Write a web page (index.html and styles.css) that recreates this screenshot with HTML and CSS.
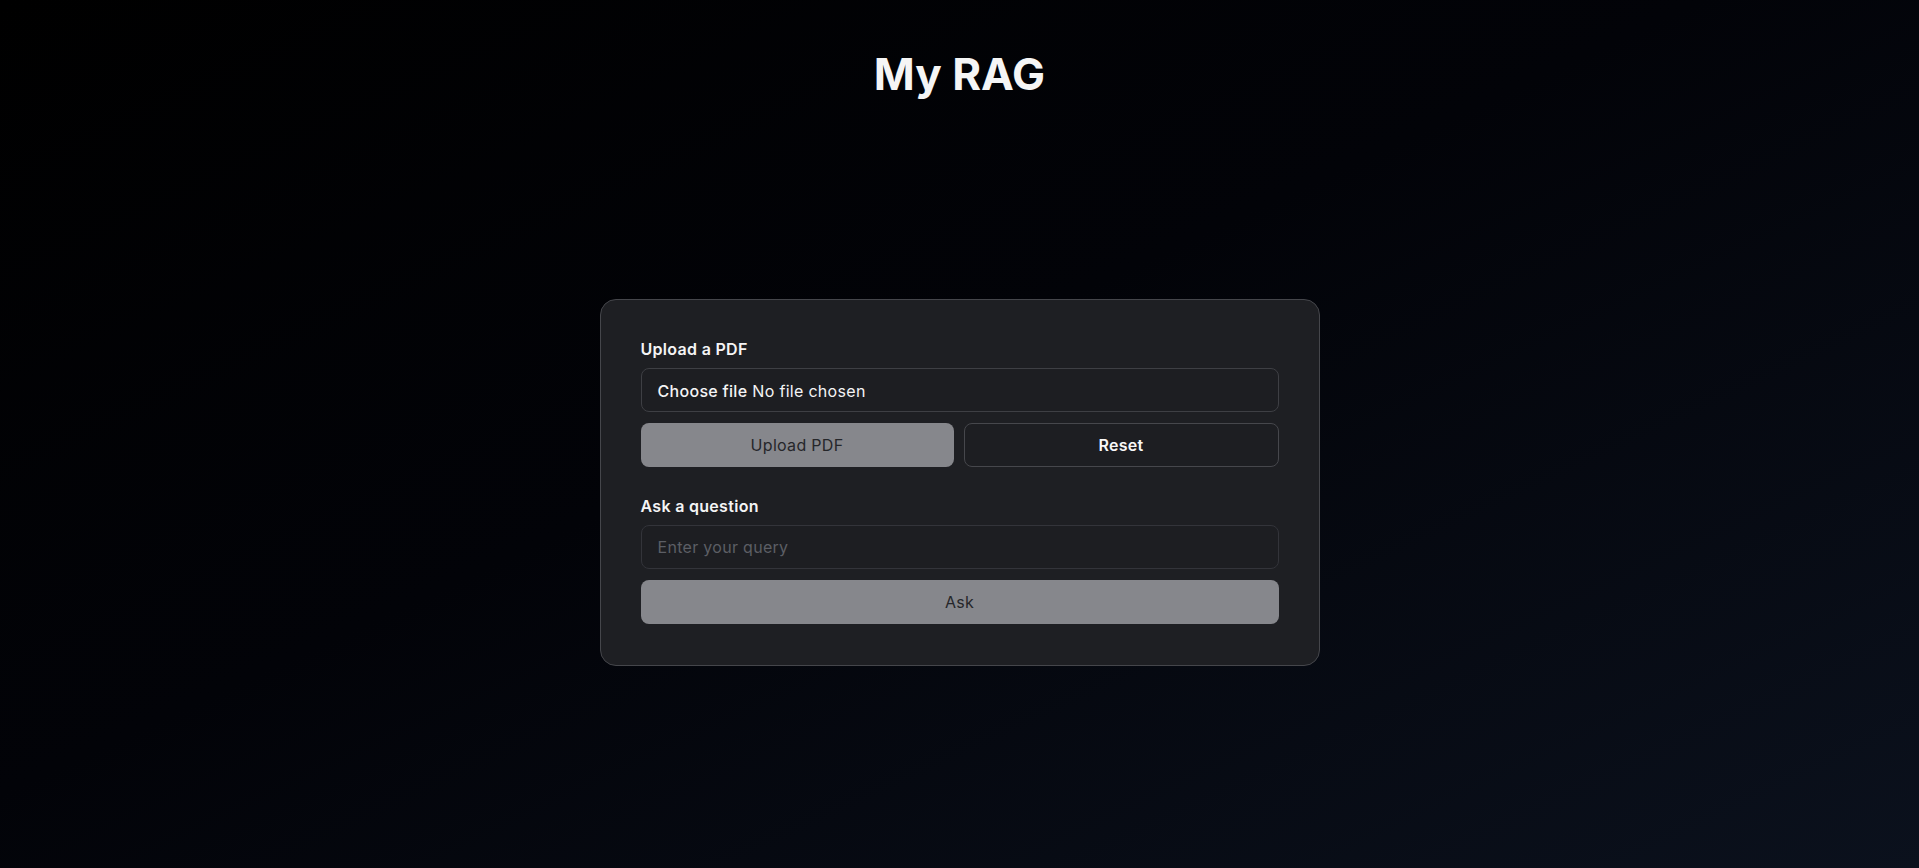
FILE: index.html
```html
<!DOCTYPE html>
<html lang="en">
<head>
    <meta charset="UTF-8">
    <meta name="viewport" content="width=device-width, initial-scale=1.0">
    <title>My RAG</title>
    <link rel="stylesheet" href="styles.css">
</head>
<body>
    <h1 class="title">My RAG</h1>

    <div class="card">
        <div class="section">
            <div class="label">Upload a PDF</div>
            <label class="file-input">
                <input type="file" accept="application/pdf">
                <span class="file-btn">Choose file</span>
                <span class="file-name">No file chosen</span>
            </label>
            <div class="button-row">
                <button class="btn btn-gray">Upload PDF</button>
                <button class="btn btn-outline">Reset</button>
            </div>
        </div>

        <div class="section section-ask">
            <div class="label">Ask a question</div>
            <input class="text-input" type="text" placeholder="Enter your query">
            <button class="btn btn-gray btn-full">Ask</button>
        </div>
    </div>
</body>
</html>
```

FILE: styles.css
```css
body {
    font-family: Inter, "Noto Sans", sans-serif;
    margin: 0;
    min-height: 100vh;
    display: flex;
    flex-direction: column;
    align-items: center;
    background: linear-gradient(155deg, #000000 0%, #020308 45%, #0b111d 100%);
    color: #f4f4f5;
}
.title {
    font-size: 44px;
    font-weight: 700;
    line-height: normal;
    margin: 47px 0 0;
    color: #f5f5f5;
}
.card {
    width: 720px;
    box-sizing: border-box;
    margin-top: 198px;
    padding: 39px 40px 41px;
    background-color: #1e1f23;
    border: 1px solid #45464b;
    border-radius: 16px;
    letter-spacing: 0.3px;
}
.section {
    display: flex;
    flex-direction: column;
}
.section-ask {
    margin-top: 29px;
}
.label {
    font-size: 16px;
    font-weight: 600;
    line-height: 20px;
    margin-bottom: 9px;
    color: #f4f4f5;
}
.file-input {
    height: 44px;
    box-sizing: border-box;
    display: flex;
    align-items: center;
    gap: 5px;
    padding: 1px 16px 0;
    border: 1px solid #3e3f44;
    border-radius: 8px;
    background-color: #1d1e22;
    font-size: 16px;
    cursor: pointer;
}
.file-input input {
    display: none;
}
.file-btn {
    font-weight: 500;
    color: #f4f4f5;
}
.file-name {
    color: #f4f4f5;
}
.button-row {
    display: flex;
    gap: 10px;
    margin-top: 11px;
}
.btn {
    flex: 1;
    height: 44px;
    font-family: inherit;
    font-size: 16px;
    letter-spacing: inherit;
    border-radius: 8px;
    cursor: pointer;
}
.btn-gray {
    background-color: #86878c;
    color: #25262a;
    border: none;
}
.btn-outline {
    background-color: #1d1e22;
    border: 1px solid #46474c;
    color: #f8f8f8;
    font-weight: 600;
}
.btn-full {
    flex: none;
    width: 100%;
    margin-top: 11px;
}
.text-input {
    height: 44px;
    box-sizing: border-box;
    padding: 0 16px;
    font-family: inherit;
    font-size: 16px;
    letter-spacing: inherit;
    color: #f4f4f5;
    background-color: #1d1e22;
    border: 1px solid #33343a;
    border-radius: 8px;
    outline: none;
}
.text-input::placeholder {
    color: #5c5e65;
}
```
